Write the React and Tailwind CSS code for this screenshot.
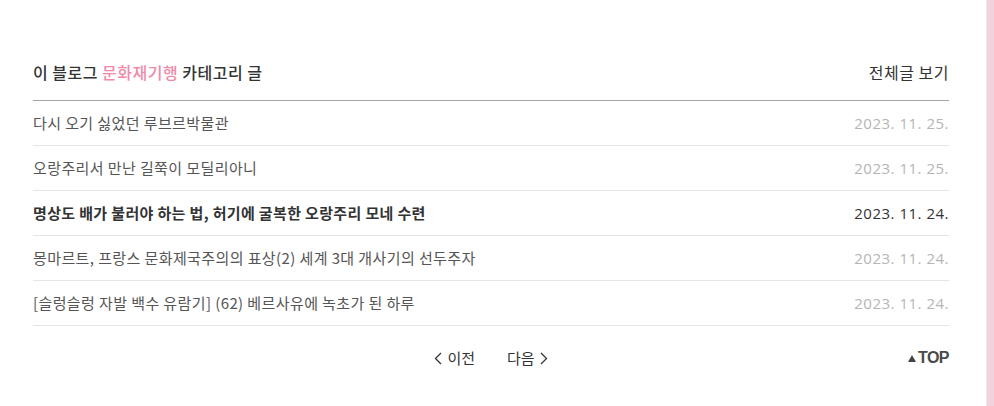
import React from "react";

const rows = [
  { t: "다시 오기 싫었던 루브르박물관", d: "2023. 11. 25.", cur: false },
  { t: "오랑주리서 만난 길쭉이 모딜리아니", d: "2023. 11. 25.", cur: false },
  { t: "명상도 배가 불러야 하는 법, 허기에 굴복한 오랑주리 모네 수련", d: "2023. 11. 24.", cur: true },
  { t: "몽마르트, 프랑스 문화제국주의의 표상(2) 세계 3대 개사기의 선두주자", d: "2023. 11. 24.", cur: false },
  { t: "[슬렁슬렁 자발 백수 유람기] (62) 베르사유에 녹초가 된 하루", d: "2023. 11. 24.", cur: false },
];

export default function App() {
  return (
    <div
      className="flex w-[994px] h-[406px] bg-white"
      style={{ fontFamily: '"Noto Sans CJK KR", "Noto Sans", sans-serif' }}
    >
      <div className="flex-1 pl-[33px] pr-[37px] pt-[58px]">
        <div className="flex items-center justify-between h-[28px]">
          <h3 className="text-[16px] font-medium tracking-[0.5px] text-[#333]">
            이 블로그 <span className="text-[#f08aaa]">문화재기행</span> 카테고리 글
          </h3>
          <span className="text-[16px] tracking-[0.5px] text-[#333]">전체글 보기</span>
        </div>
        <div className="mt-[14px] border-t border-[#a5a5a5]">
          {rows.map((r, i) => (
            <div
              key={i}
              className="flex items-center justify-between h-[45px] border-b border-[#e5e5e5]"
            >
              <span
                className={
                  r.cur
                    ? "text-[15px] tracking-[0.35px] font-bold text-[#333]"
                    : "text-[15px] tracking-[0.4px] text-[#555]"
                }
              >
                {r.t}
              </span>
              <span
                className={
                  r.cur
                    ? "text-[15px] tracking-[0.5px] text-[#333]"
                    : "text-[15px] tracking-[0.5px] text-[#b5b5b5]"
                }
                style={{ fontFamily: '"Open Sans", "Noto Sans CJK KR", sans-serif' }}
              >
                {r.d}
              </span>
            </div>
          ))}
        </div>
        <div className="relative flex items-center justify-center h-[64px] text-[15px] text-[#333]">
          <div className="flex items-center gap-[32px]">
            <span className="flex items-center gap-[5px]">
              <svg width="8" height="13" viewBox="0 0 8 13" fill="none" stroke="#333" strokeWidth="1.3">
                <path d="M7 1 L1.5 6.5 L7 12" />
              </svg>
              이전
            </span>
            <span className="flex items-center gap-[5px]">
              다음
              <svg width="8" height="13" viewBox="0 0 8 13" fill="none" stroke="#333" strokeWidth="1.3">
                <path d="M1 1 L6.5 6.5 L1 12" />
              </svg>
            </span>
          </div>
          <span
            className="absolute right-0 flex items-center gap-[2px] text-[16px] font-bold tracking-[-0.5px] text-[#4a4a4a]"
            style={{ fontFamily: '"Liberation Sans", Arial, sans-serif' }}
          >
            <svg width="8" height="7" viewBox="0 0 8 7" fill="#444">
              <path d="M4 0 L8 7 L0 7 Z" />
            </svg>
            TOP
          </span>
        </div>
      </div>
      <div className="w-[8px] h-full bg-[#efd3dd] border-l border-[#f6e4ea]" />
    </div>
  );
}
